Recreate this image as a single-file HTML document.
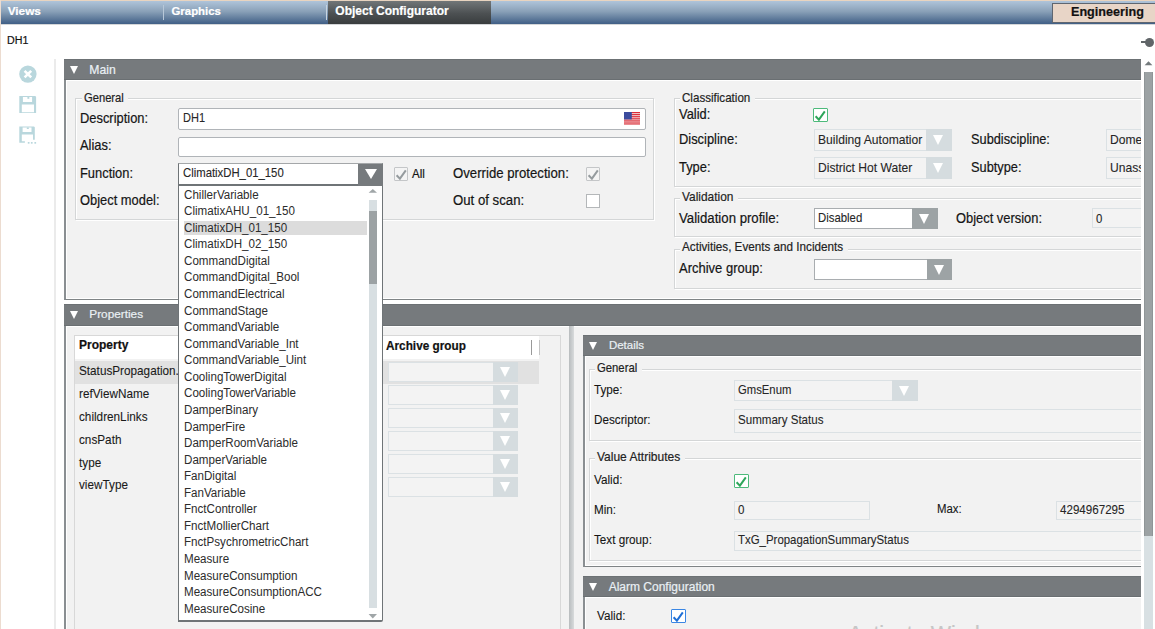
<!DOCTYPE html>
<html><head><meta charset="utf-8"><style>
*{box-sizing:border-box;margin:0;padding:0}
html,body{width:1155px;height:629px;overflow:hidden;background:#fff;font-family:"Liberation Sans",sans-serif;color:#151515}
.a{position:absolute}
.c{position:absolute;overflow:hidden}
.t{position:absolute;white-space:nowrap;line-height:1;-webkit-text-stroke:0.2px currentColor}
.n{-webkit-text-stroke:0}
.m{-webkit-text-stroke:0.1px currentColor}
.tri{position:absolute;width:0;height:0;border-left:4.9px solid transparent;border-right:4.9px solid transparent;border-top:8.5px solid #fff}
.wt{position:absolute;width:0;height:0;border-left:5.6px solid transparent;border-right:5.6px solid transparent;border-top:10px solid #fff}
</style></head><body>
<div class="a" style="left:0px;top:0px;width:1155px;height:1px;background:#e8d4c0"></div>
<div class="a" style="left:0px;top:0px;width:1px;height:629px;background:#ecdcd0"></div>
<div class="a" style="left:1px;top:1px;width:1154px;height:23px;background:linear-gradient(#afc4da,#8aa1b8 45%,#405f86)"></div>
<div class="a" style="left:1px;top:24px;width:1154px;height:1px;background:#d4d6d8"></div>
<div class="t " style="left:7.70px;top:6.11px;font-size:11.80px;font-weight:bold;color:#fff">Views</div>
<div class="a" style="left:163px;top:5px;width:1px;height:15px;background:#b8c8d8"></div>
<div class="t " style="left:171.50px;top:5.65px;font-size:11.40px;font-weight:bold;color:#fff">Graphics</div>
<div class="a" style="left:328px;top:1px;width:163px;height:23px;background:linear-gradient(#717678,#4c5052 55%,#393d3e)"></div>
<div class="a" style="left:326px;top:5px;width:1px;height:15px;background:#c8d4e0"></div>
<div class="t " style="left:335.30px;top:5.44px;font-size:12.00px;font-weight:bold;color:#fff">Object Configurator</div>
<div class="a" style="left:1052px;top:3px;width:103px;height:20px;background:#e8d5c7;border:1px solid #5f6670;border-right:none"></div>
<div class="t " style="left:1070.70px;top:5.29px;font-size:13.36px;transform:scaleX(0.9434);transform-origin:0 0;font-weight:bold;color:#111">Engineering</div>
<div class="t " style="left:6.50px;top:34.89px;font-size:11.23px;transform:scaleX(0.9524);transform-origin:0 0;color:#111">DH1</div>
<div class="a" style="left:1141px;top:41px;width:5px;height:2px;background:#606568"></div>
<div class="a" style="left:1145px;top:38px;width:9px;height:9px;background:#606568;border-radius:50%"></div>
<div class="a" style="left:54px;top:59px;width:2px;height:570px;background:#ebebeb"></div>
<svg class="a" style="left:0;top:0" width="60" height="160">
<circle cx="27.9" cy="74.1" r="8.7" fill="#b9d7dd"/>
<path d="M24.6 70.8 L31.2 77.4 M31.2 70.8 L24.6 77.4" stroke="#fff" stroke-width="2.6"/>
<path fill="#b9d7dd" fill-rule="evenodd" d="M19.3 95.9 H35.2 L36.1 96.8 V113.1 H19.3 Z M21.8 104.6 H34 V112.2 H21.8 Z M22.9 96.9 H32.1 V102.1 H22.9 Z"/>
<rect x="27.4" y="96.9" width="1.9" height="1.9" fill="#b9d7dd"/>
<path fill="#b9d7dd" fill-rule="evenodd" d="M19.3 126.5 H34 L34.8 127.3 V139.8 H33 V134.6 H21.8 V141.2 H24.9 V142.7 H19.3 Z M22.6 127.4 H31.5 V132.1 H22.6 Z"/>
<rect x="26.8" y="127.4" width="2" height="1.6" fill="#b9d7dd"/>
<rect x="27.8" y="142" width="1.7" height="1.7" fill="#b9d7dd"/>
<rect x="30.9" y="142" width="1.7" height="1.7" fill="#b9d7dd"/>
<rect x="34.4" y="142" width="1.7" height="1.7" fill="#b9d7dd"/>
</svg>
<div class="a" style="left:64px;top:59px;width:1077px;height:21px;background:#767a7d;border-top:1px solid #6c7174;border-bottom:1px solid #6a6f72"></div>
<div class="tri" style="left:70.2px;top:66px"></div>
<div class="t " style="left:89.30px;top:63.67px;font-size:12.20px;color:#eaf0f4">Main</div>
<div class="a" style="left:64px;top:80px;width:1077px;height:220px;background:#f2f2f2;border-left:2px solid #8a8f92;border-bottom:1px solid #7f8486;box-shadow:inset 1px 1px 0 #fff,inset 0 -1px 0 #fff"></div>
<div class="a" style="left:75px;top:98px;width:579px;height:122px;border:1px solid #d4d6d7;box-shadow:inset 1px 1px 0 #fff,1px 1px 0 #fff"></div>
<div class="a" style="left:81.50px;top:95px;width:46.8px;height:6px;background:#f2f2f2"></div>
<div class="t " style="left:83.50px;top:91.68px;font-size:12.54px;transform:scaleX(0.8929);transform-origin:0 0;color:#222">General</div>
<div class="t " style="left:80.00px;top:112.01px;font-size:13.93px;transform:scaleX(0.9259);transform-origin:0 0;">Description:</div>
<div class="t " style="left:80.00px;top:139.11px;font-size:13.93px;transform:scaleX(0.9259);transform-origin:0 0;">Alias:</div>
<div class="t " style="left:80.00px;top:166.81px;font-size:13.93px;transform:scaleX(0.9259);transform-origin:0 0;">Function:</div>
<div class="t " style="left:80.00px;top:193.81px;font-size:13.93px;transform:scaleX(0.9259);transform-origin:0 0;">Object model:</div>
<div class="a" style="left:178px;top:108px;width:468px;height:22px;background:#fff;border:1px solid #b0b4b8;border-radius:2px"></div>
<div class="t m" style="left:182.80px;top:112.17px;font-size:12.32px;transform:scaleX(0.8929);transform-origin:0 0;color:#262626">DH1</div>
<svg class="a" style="left:623.5px;top:112px" width="16" height="13">
<rect width="16" height="13" fill="#f4dede"/><rect y="0.00" width="16" height="1.05" fill="#dc2a36"/><rect y="1.90" width="16" height="1.05" fill="#dc2a36"/><rect y="3.80" width="16" height="1.05" fill="#dc2a36"/><rect y="5.70" width="16" height="1.05" fill="#dc2a36"/><rect y="7.60" width="16" height="1.05" fill="#dc2a36"/><rect y="9.50" width="16" height="1.05" fill="#dc2a36"/><rect y="11.40" width="16" height="1.05" fill="#dc2a36"/>
<rect width="7.8" height="7.4" fill="#3b4c9e"/>
</svg>
<div class="a" style="left:178px;top:137px;width:468px;height:20px;background:#fff;border:1px solid #b0b4b8;border-radius:2px"></div>
<div class="a" style="left:178px;top:163px;width:205px;height:23px;background:#fff;border:1px solid #6f7477;border-top-color:#a4a7a9;border-bottom-width:2px"></div>
<div class="a" style="left:358px;top:164px;width:25px;height:22px;background:#767a7d"></div>
<div class="a" style="left:364.7px;top:168.6px;width:0;height:0;border-left:6px solid transparent;border-right:6px solid transparent;border-top:10.4px solid #fff"></div>
<div class="t m" style="left:182.50px;top:167.53px;font-size:11.90px;transform:scaleX(0.9524);transform-origin:0 0;color:#262626">ClimatixDH_01_150</div>
<div class="a" style="left:393.8px;top:167px;width:14.5px;height:14px;background:#f4f4f4;border:1px solid #c4c6c8;border-radius:1px"></div>
<svg class="a" style="left:393.8px;top:167px" width="15" height="14"><path d="M2.6 8.2 L5.9 11.6 L11.8 3.4" fill="none" stroke="#959b9e" stroke-width="2.0"/></svg>
<div class="t " style="left:412.30px;top:167.78px;font-size:12.08px;transform:scaleX(0.9524);transform-origin:0 0;">All</div>
<div class="t " style="left:452.60px;top:166.13px;font-size:14.26px;transform:scaleX(0.9259);transform-origin:0 0;">Override protection:</div>
<div class="a" style="left:585.5px;top:167px;width:14.5px;height:14px;background:#f4f4f4;border:1px solid #c4c6c8;border-radius:1px"></div>
<svg class="a" style="left:585.5px;top:167px" width="15" height="14"><path d="M2.6 8.2 L5.9 11.6 L11.8 3.4" fill="none" stroke="#959b9e" stroke-width="2.0"/></svg>
<div class="t " style="left:452.60px;top:193.13px;font-size:14.26px;transform:scaleX(0.9259);transform-origin:0 0;">Out of scan:</div>
<div class="a" style="left:585.5px;top:194px;width:14px;height:14px;background:#fff;border:1px solid #b4b7b9"></div>
<div class="a" style="left:673.8px;top:98px;width:490px;height:89px;border:1px solid #d4d6d7;box-shadow:inset 1px 1px 0 #fff,1px 1px 0 #fff"></div>
<div class="a" style="left:679.90px;top:95px;width:75.3px;height:6px;background:#f2f2f2"></div>
<div class="t " style="left:681.90px;top:90.60px;font-size:12.99px;transform:scaleX(0.8929);transform-origin:0 0;color:#222">Classification</div>
<div class="t " style="left:678.70px;top:108.21px;font-size:13.93px;transform:scaleX(0.9259);transform-origin:0 0;">Valid:</div>
<div class="a" style="left:813.3px;top:108px;width:14.5px;height:14px;background:#fff;border:1.5px solid #4dba7b;border-radius:1px"></div>
<svg class="a" style="left:813.3px;top:108px" width="15" height="14"><path d="M2.6 8.2 L5.9 11.6 L11.8 3.4" fill="none" stroke="#2ea65a" stroke-width="2.0"/></svg>
<div class="t " style="left:678.70px;top:133.21px;font-size:13.93px;transform:scaleX(0.9259);transform-origin:0 0;">Discipline:</div>
<div class="t " style="left:678.70px;top:161.01px;font-size:13.93px;transform:scaleX(0.9259);transform-origin:0 0;">Type:</div>
<div class="a" style="left:814px;top:129px;width:138px;height:21.5px;background:#f3f3f3;border:1.5px solid #dbe1e4"></div>
<div class="a" style="left:926px;top:129px;width:26px;height:21.5px;background:#d5dcdf"></div>
<div class="a" style="left:933.4px;top:134.8px;width:0;height:0;border-left:5.6px solid transparent;border-right:5.6px solid transparent;border-top:10px solid #fff"></div>
<div class="c" style="left:814px;top:129px;width:112px;height:21.5px">
<div class="t m" style="left:4.30px;top:3.84px;font-size:13.19px;transform:scaleX(0.9174);transform-origin:0 0;color:#262626">Building Automatior</div>
</div>
<div class="a" style="left:814px;top:157px;width:138px;height:21.5px;background:#f3f3f3;border:1.5px solid #dbe1e4"></div>
<div class="a" style="left:926px;top:157px;width:26px;height:21.5px;background:#d5dcdf"></div>
<div class="a" style="left:933.4px;top:162.8px;width:0;height:0;border-left:5.6px solid transparent;border-right:5.6px solid transparent;border-top:10px solid #fff"></div>
<div class="c" style="left:814px;top:157px;width:112px;height:21.5px">
<div class="t m" style="left:4.30px;top:4.04px;font-size:13.19px;transform:scaleX(0.9174);transform-origin:0 0;color:#262626">District Hot Water</div>
</div>
<div class="t " style="left:971.30px;top:133.10px;font-size:13.82px;transform:scaleX(0.9259);transform-origin:0 0;">Subdiscipline:</div>
<div class="t " style="left:971.30px;top:161.10px;font-size:13.82px;transform:scaleX(0.9259);transform-origin:0 0;">Subtype:</div>
<div class="a" style="left:1106px;top:129px;width:60px;height:21.5px;background:#f3f3f3;border:1.5px solid #dbe1e4"></div>
<div class="t m" style="left:1110.00px;top:132.84px;font-size:13.19px;transform:scaleX(0.9174);transform-origin:0 0;color:#262626">Dome</div>
<div class="a" style="left:1106px;top:157px;width:60px;height:21.5px;background:#f3f3f3;border:1.5px solid #dbe1e4"></div>
<div class="t m" style="left:1110.00px;top:161.04px;font-size:13.19px;transform:scaleX(0.9174);transform-origin:0 0;color:#262626">Unass</div>
<div class="a" style="left:673.8px;top:198px;width:490px;height:39px;border:1px solid #d4d6d7;box-shadow:inset 1px 1px 0 #fff,1px 1px 0 #fff"></div>
<div class="a" style="left:679.90px;top:195px;width:58.4px;height:6px;background:#f2f2f2"></div>
<div class="t " style="left:681.90px;top:190.12px;font-size:13.33px;transform:scaleX(0.8929);transform-origin:0 0;color:#222">Validation</div>
<div class="t " style="left:678.60px;top:210.53px;font-size:14.26px;transform:scaleX(0.9259);transform-origin:0 0;">Validation profile:</div>
<div class="a" style="left:813.6px;top:207.7px;width:124.4px;height:21px;background:#fff;border:1px solid #a9adb0"></div>
<div class="a" style="left:912.0px;top:207.7px;width:26px;height:21px;background:#9da3a5"></div>
<div class="a" style="left:919.4px;top:213.8px;width:0;height:0;border-left:5.6px solid transparent;border-right:5.6px solid transparent;border-top:10px solid #fff"></div>
<div class="t m" style="left:817.90px;top:211.80px;font-size:12.52px;transform:scaleX(0.9091);transform-origin:0 0;color:#262626">Disabled</div>
<div class="t " style="left:956.30px;top:211.51px;font-size:13.93px;transform:scaleX(0.9259);transform-origin:0 0;">Object version:</div>
<div class="a" style="left:1092.4px;top:207.7px;width:60px;height:20.5px;background:#f3f3f3;border:1.5px solid #dbe1e4"></div>
<div class="t m" style="left:1096.40px;top:212.58px;font-size:12.54px;transform:scaleX(0.9091);transform-origin:0 0;color:#262626">0</div>
<div class="a" style="left:673.8px;top:249px;width:490px;height:40px;border:1px solid #d4d6d7;box-shadow:inset 1px 1px 0 #fff,1px 1px 0 #fff"></div>
<div class="a" style="left:679.90px;top:246px;width:168.3px;height:6px;background:#f2f2f2"></div>
<div class="t " style="left:681.90px;top:239.91px;font-size:13.10px;transform:scaleX(0.8929);transform-origin:0 0;color:#222">Activities, Events and Incidents</div>
<div class="t " style="left:678.60px;top:260.92px;font-size:14.04px;transform:scaleX(0.9259);transform-origin:0 0;">Archive group:</div>
<div class="a" style="left:813.6px;top:258.6px;width:138px;height:21px;background:#fff;border:1px solid #a9adb0"></div>
<div class="a" style="left:926.6px;top:258.6px;width:25px;height:21px;background:#9da3a5"></div>
<div class="a" style="left:933.5px;top:264.7px;width:0;height:0;border-left:5.6px solid transparent;border-right:5.6px solid transparent;border-top:10px solid #fff"></div>
<div class="a" style="left:1141px;top:59px;width:14px;height:570px;background:#fff"></div>
<div class="a" style="left:64px;top:304px;width:1077px;height:22px;background:#767a7d;border-top:1px solid #6c7174;border-bottom:1px solid #6a6f72"></div>
<div class="tri" style="left:70.2px;top:311px"></div>
<div class="t " style="left:89.30px;top:309.21px;font-size:11.80px;color:#eaf0f4">Properties</div>
<div class="a" style="left:64px;top:326px;width:1077px;height:303px;background:#f2f2f2;border-left:2px solid #8a8f92;box-shadow:inset 1px 1px 0 #fff"></div>
<div class="a" style="left:74px;top:335px;width:487px;height:294px;border:1px solid #d8d8d8;border-bottom:none;background:#f2f2f2"></div>
<div class="a" style="left:75px;top:336px;width:464px;height:23px;background:#fff"></div>
<div class="t " style="left:78.80px;top:339.14px;font-size:12.36px;transform:scaleX(0.9709);transform-origin:0 0;font-weight:bold;color:#111">Property</div>
<div class="t " style="left:385.90px;top:339.71px;font-size:12.15px;transform:scaleX(0.9709);transform-origin:0 0;font-weight:bold;color:#111">Archive group</div>
<div class="a" style="left:531px;top:340px;width:1px;height:15px;background:#999"></div>
<div class="a" style="left:539px;top:340px;width:1px;height:15px;background:#c4c4c4"></div>
<div class="a" style="left:75px;top:361px;width:464px;height:23px;background:#e1e1e1"></div>
<div class="t m" style="left:78.50px;top:364.36px;font-size:13.28px;transform:scaleX(0.8850);transform-origin:0 0;color:#1a1a1a">StatusPropagation.</div>
<div class="t m" style="left:78.50px;top:387.18px;font-size:13.28px;transform:scaleX(0.8850);transform-origin:0 0;color:#1a1a1a">refViewName</div>
<div class="t m" style="left:78.50px;top:410.00px;font-size:13.28px;transform:scaleX(0.8850);transform-origin:0 0;color:#1a1a1a">childrenLinks</div>
<div class="t m" style="left:78.50px;top:432.82px;font-size:13.28px;transform:scaleX(0.8850);transform-origin:0 0;color:#1a1a1a">cnsPath</div>
<div class="t m" style="left:78.50px;top:455.64px;font-size:13.28px;transform:scaleX(0.8850);transform-origin:0 0;color:#1a1a1a">type</div>
<div class="t m" style="left:78.50px;top:478.46px;font-size:13.28px;transform:scaleX(0.8850);transform-origin:0 0;color:#1a1a1a">viewType</div>
<div class="a" style="left:387.7px;top:362.3px;width:130.5px;height:20px;background:#f3f3f3;border:1.5px solid #dbe1e4"></div>
<div class="a" style="left:492.5px;top:362.3px;width:25.7px;height:20px;background:#d5dcdf"></div>
<div class="a" style="left:499.8px;top:367.3px;width:0;height:0;border-left:5.6px solid transparent;border-right:5.6px solid transparent;border-top:10px solid #fff"></div>
<div class="a" style="left:387.7px;top:385.2px;width:130.5px;height:20px;background:#f3f3f3;border:1.5px solid #dbe1e4"></div>
<div class="a" style="left:492.5px;top:385.2px;width:25.7px;height:20px;background:#d5dcdf"></div>
<div class="a" style="left:499.8px;top:390.2px;width:0;height:0;border-left:5.6px solid transparent;border-right:5.6px solid transparent;border-top:10px solid #fff"></div>
<div class="a" style="left:387.7px;top:408px;width:130.5px;height:20px;background:#f3f3f3;border:1.5px solid #dbe1e4"></div>
<div class="a" style="left:492.5px;top:408px;width:25.7px;height:20px;background:#d5dcdf"></div>
<div class="a" style="left:499.8px;top:413.0px;width:0;height:0;border-left:5.6px solid transparent;border-right:5.6px solid transparent;border-top:10px solid #fff"></div>
<div class="a" style="left:387.7px;top:431px;width:130.5px;height:20px;background:#f3f3f3;border:1.5px solid #dbe1e4"></div>
<div class="a" style="left:492.5px;top:431px;width:25.7px;height:20px;background:#d5dcdf"></div>
<div class="a" style="left:499.8px;top:436.0px;width:0;height:0;border-left:5.6px solid transparent;border-right:5.6px solid transparent;border-top:10px solid #fff"></div>
<div class="a" style="left:387.7px;top:454px;width:130.5px;height:20px;background:#f3f3f3;border:1.5px solid #dbe1e4"></div>
<div class="a" style="left:492.5px;top:454px;width:25.7px;height:20px;background:#d5dcdf"></div>
<div class="a" style="left:499.8px;top:459.0px;width:0;height:0;border-left:5.6px solid transparent;border-right:5.6px solid transparent;border-top:10px solid #fff"></div>
<div class="a" style="left:387.7px;top:477px;width:130.5px;height:20px;background:#f3f3f3;border:1.5px solid #dbe1e4"></div>
<div class="a" style="left:492.5px;top:477px;width:25.7px;height:20px;background:#d5dcdf"></div>
<div class="a" style="left:499.8px;top:482.0px;width:0;height:0;border-left:5.6px solid transparent;border-right:5.6px solid transparent;border-top:10px solid #fff"></div>
<div class="a" style="left:569px;top:326px;width:5px;height:303px;background:linear-gradient(90deg,#b8bcbe,#d8dbdc)"></div>
<div class="a" style="left:583px;top:335px;width:558px;height:21px;background:#767a7d;border-top:1px solid #6c7174;border-bottom:1px solid #6a6f72"></div>
<div class="tri" style="left:589.2px;top:341.5px"></div>
<div class="t " style="left:608.90px;top:340.27px;font-size:11.50px;color:#eaf0f4">Details</div>
<div class="a" style="left:583px;top:356px;width:558px;height:211px;background:#f2f2f2;border-left:2px solid #8a8f92;border-bottom:1px solid #7f8486;box-shadow:inset 1px 1px 0 #fff,inset 0 -1px 0 #fff"></div>
<div class="a" style="left:589px;top:369px;width:580px;height:72px;border:1px solid #d4d6d7;box-shadow:inset 1px 1px 0 #fff,1px 1px 0 #fff"></div>
<div class="a" style="left:594.90px;top:366px;width:47.2px;height:6px;background:#f2f2f2"></div>
<div class="t " style="left:596.90px;top:361.68px;font-size:12.43px;transform:scaleX(0.9091);transform-origin:0 0;color:#222">General</div>
<div class="t m" style="left:594.30px;top:382.81px;font-size:13.22px;transform:scaleX(0.8850);transform-origin:0 0;">Type:</div>
<div class="a" style="left:734px;top:380px;width:184px;height:21px;background:#f3f3f3;border:1.5px solid #dbe1e4"></div>
<div class="a" style="left:892px;top:380px;width:26px;height:21px;background:#d5dcdf"></div>
<div class="a" style="left:899.4px;top:385.5px;width:0;height:0;border-left:5.6px solid transparent;border-right:5.6px solid transparent;border-top:10px solid #fff"></div>
<div class="c" style="left:734px;top:380px;width:158px;height:21px">
<div class="t m" style="left:4.30px;top:3.50px;font-size:12.88px;transform:scaleX(0.8772);transform-origin:0 0;color:#262626">GmsEnum</div>
</div>
<div class="t m" style="left:594.30px;top:413.21px;font-size:13.22px;transform:scaleX(0.8850);transform-origin:0 0;">Descriptor:</div>
<div class="a" style="left:734px;top:409px;width:420px;height:23.5px;background:#f3f3f3;border:1.5px solid #dbe1e4"></div>
<div class="t m" style="left:738.00px;top:412.53px;font-size:13.07px;transform:scaleX(0.8850);transform-origin:0 0;color:#262626">Summary Status</div>
<div class="a" style="left:589px;top:458px;width:580px;height:103px;border:1px solid #d4d6d7;box-shadow:inset 1px 1px 0 #fff,1px 1px 0 #fff"></div>
<div class="a" style="left:594.70px;top:455px;width:90.8px;height:6px;background:#f2f2f2"></div>
<div class="t " style="left:596.70px;top:450.22px;font-size:13.44px;transform:scaleX(0.8929);transform-origin:0 0;color:#222">Value Attributes</div>
<div class="t m" style="left:594.10px;top:472.81px;font-size:13.22px;transform:scaleX(0.8850);transform-origin:0 0;">Valid:</div>
<div class="a" style="left:734px;top:473.6px;width:14.5px;height:14px;background:#fff;border:1.5px solid #4dba7b;border-radius:1px"></div>
<svg class="a" style="left:734px;top:473.6px" width="15" height="14"><path d="M2.6 8.2 L5.9 11.6 L11.8 3.4" fill="none" stroke="#2ea65a" stroke-width="2.0"/></svg>
<div class="t m" style="left:594.10px;top:502.81px;font-size:13.22px;transform:scaleX(0.8850);transform-origin:0 0;">Min:</div>
<div class="a" style="left:734px;top:501px;width:135.5px;height:19px;background:#f3f3f3;border:1.5px solid #dbe1e4"></div>
<div class="t m" style="left:738.00px;top:502.81px;font-size:13.22px;transform:scaleX(0.8772);transform-origin:0 0;color:#262626">0</div>
<div class="t m" style="left:937.00px;top:502.70px;font-size:12.88px;transform:scaleX(0.8850);transform-origin:0 0;">Max:</div>
<div class="a" style="left:1056px;top:501px;width:100px;height:19px;background:#f3f3f3;border:1.5px solid #dbe1e4"></div>
<div class="t m" style="left:1060.00px;top:502.70px;font-size:13.11px;transform:scaleX(0.8850);transform-origin:0 0;color:#262626">4294967295</div>
<div class="t m" style="left:594.10px;top:532.81px;font-size:13.22px;transform:scaleX(0.8850);transform-origin:0 0;">Text group:</div>
<div class="a" style="left:734px;top:531px;width:420px;height:20px;background:#f3f3f3;border:1.5px solid #dbe1e4"></div>
<div class="t m" style="left:738.00px;top:533.36px;font-size:13.04px;transform:scaleX(0.8772);transform-origin:0 0;color:#262626">TxG_PropagationSummaryStatus</div>
<div class="a" style="left:583px;top:576px;width:558px;height:21px;background:#767a7d;border-top:1px solid #6c7174;border-bottom:1px solid #6a6f72"></div>
<div class="tri" style="left:589.2px;top:583px"></div>
<div class="t " style="left:608.70px;top:580.84px;font-size:12.00px;color:#eaf0f4">Alarm Configuration</div>
<div class="a" style="left:583px;top:597px;width:558px;height:40px;background:#f2f2f2;border-left:2px solid #8a8f92;box-shadow:inset 1px 1px 0 #fff"></div>
<div class="t m" style="left:596.70px;top:608.81px;font-size:13.22px;transform:scaleX(0.8850);transform-origin:0 0;">Valid:</div>
<div class="a" style="left:671.4px;top:608.6px;width:14.5px;height:14px;background:#fff;border:1.5px solid #3a86e4;border-radius:1px"></div>
<svg class="a" style="left:671.4px;top:608.6px" width="15" height="14"><path d="M2.6 8.2 L5.9 11.6 L11.8 3.4" fill="none" stroke="#1f6fd6" stroke-width="2.0"/></svg>
<div class="t " style="left:848.30px;top:624.10px;font-size:21.50px;color:#c6c6c6">Activate Windows</div>
<div class="a" style="left:1141px;top:59px;width:14px;height:570px;background:#fff"></div>
<svg class="a" style="left:1144px;top:60px" width="9" height="6"><path d="M0.6 5.3 L4.5 1.3 L8.4 5.3 Z" fill="#737a7d"/></svg>
<div class="a" style="left:1144px;top:72px;width:9px;height:464.4px;background:#9ca2a4;border-left:1px solid #8f9597;border-right:1px solid #8f9597"></div>
<div class="a" style="left:1144px;top:536.4px;width:9px;height:93px;background:#d8e0e3"></div>
<div class="a" style="left:178px;top:186px;width:205px;height:436px;background:#fff;border:1px solid #6f7477;border-top:none;border-bottom-width:2px;border-bottom-right-radius:2px"></div>
<div class="a" style="left:183.8px;top:220.5px;width:183.2px;height:14.7px;background:#dcdcdc"></div>
<div class="t n" style="left:183.80px;top:188.69px;font-size:12.30px;transform:scaleX(0.9434);transform-origin:0 0;color:#2c2c2c">ChillerVariable</div>
<div class="t n" style="left:183.80px;top:205.25px;font-size:12.30px;transform:scaleX(0.9434);transform-origin:0 0;color:#2c2c2c">ClimatixAHU_01_150</div>
<div class="t n" style="left:183.80px;top:221.81px;font-size:12.30px;transform:scaleX(0.9434);transform-origin:0 0;color:#2c2c2c">ClimatixDH_01_150</div>
<div class="t n" style="left:183.80px;top:238.37px;font-size:12.30px;transform:scaleX(0.9434);transform-origin:0 0;color:#2c2c2c">ClimatixDH_02_150</div>
<div class="t n" style="left:183.80px;top:254.93px;font-size:12.30px;transform:scaleX(0.9434);transform-origin:0 0;color:#2c2c2c">CommandDigital</div>
<div class="t n" style="left:183.80px;top:271.49px;font-size:12.30px;transform:scaleX(0.9434);transform-origin:0 0;color:#2c2c2c">CommandDigital_Bool</div>
<div class="t n" style="left:183.80px;top:288.05px;font-size:12.30px;transform:scaleX(0.9434);transform-origin:0 0;color:#2c2c2c">CommandElectrical</div>
<div class="t n" style="left:183.80px;top:304.61px;font-size:12.30px;transform:scaleX(0.9434);transform-origin:0 0;color:#2c2c2c">CommandStage</div>
<div class="t n" style="left:183.80px;top:321.17px;font-size:12.30px;transform:scaleX(0.9434);transform-origin:0 0;color:#2c2c2c">CommandVariable</div>
<div class="t n" style="left:183.80px;top:337.73px;font-size:12.30px;transform:scaleX(0.9434);transform-origin:0 0;color:#2c2c2c">CommandVariable_Int</div>
<div class="t n" style="left:183.80px;top:354.29px;font-size:12.30px;transform:scaleX(0.9434);transform-origin:0 0;color:#2c2c2c">CommandVariable_Uint</div>
<div class="t n" style="left:183.80px;top:370.85px;font-size:12.30px;transform:scaleX(0.9434);transform-origin:0 0;color:#2c2c2c">CoolingTowerDigital</div>
<div class="t n" style="left:183.80px;top:387.41px;font-size:12.30px;transform:scaleX(0.9434);transform-origin:0 0;color:#2c2c2c">CoolingTowerVariable</div>
<div class="t n" style="left:183.80px;top:403.97px;font-size:12.30px;transform:scaleX(0.9434);transform-origin:0 0;color:#2c2c2c">DamperBinary</div>
<div class="t n" style="left:183.80px;top:420.53px;font-size:12.30px;transform:scaleX(0.9434);transform-origin:0 0;color:#2c2c2c">DamperFire</div>
<div class="t n" style="left:183.80px;top:437.09px;font-size:12.30px;transform:scaleX(0.9434);transform-origin:0 0;color:#2c2c2c">DamperRoomVariable</div>
<div class="t n" style="left:183.80px;top:453.65px;font-size:12.30px;transform:scaleX(0.9434);transform-origin:0 0;color:#2c2c2c">DamperVariable</div>
<div class="t n" style="left:183.80px;top:470.21px;font-size:12.30px;transform:scaleX(0.9434);transform-origin:0 0;color:#2c2c2c">FanDigital</div>
<div class="t n" style="left:183.80px;top:486.77px;font-size:12.30px;transform:scaleX(0.9434);transform-origin:0 0;color:#2c2c2c">FanVariable</div>
<div class="t n" style="left:183.80px;top:503.33px;font-size:12.30px;transform:scaleX(0.9434);transform-origin:0 0;color:#2c2c2c">FnctController</div>
<div class="t n" style="left:183.80px;top:519.89px;font-size:12.30px;transform:scaleX(0.9434);transform-origin:0 0;color:#2c2c2c">FnctMollierChart</div>
<div class="t n" style="left:183.80px;top:536.45px;font-size:12.30px;transform:scaleX(0.9434);transform-origin:0 0;color:#2c2c2c">FnctPsychrometricChart</div>
<div class="t n" style="left:183.80px;top:553.01px;font-size:12.30px;transform:scaleX(0.9434);transform-origin:0 0;color:#2c2c2c">Measure</div>
<div class="t n" style="left:183.80px;top:569.57px;font-size:12.30px;transform:scaleX(0.9434);transform-origin:0 0;color:#2c2c2c">MeasureConsumption</div>
<div class="t n" style="left:183.80px;top:586.13px;font-size:12.30px;transform:scaleX(0.9434);transform-origin:0 0;color:#2c2c2c">MeasureConsumptionACC</div>
<div class="t n" style="left:183.80px;top:602.69px;font-size:12.30px;transform:scaleX(0.9434);transform-origin:0 0;color:#2c2c2c">MeasureCosine</div>
<svg class="a" style="left:368px;top:188px" width="10" height="6"><path d="M0.6 4.8 L4.8 0.9 L9 4.8 Z" fill="#a0a6a8"/></svg>
<div class="a" style="left:369.3px;top:200px;width:7.8px;height:408.3px;background:#d8dfe2"></div>
<div class="a" style="left:369.3px;top:210.7px;width:7.8px;height:72.9px;background:#9ca2a4"></div>
<svg class="a" style="left:368px;top:613px" width="10" height="7"><path d="M0.6 0.9 L4.8 5.5 L9 0.9 Z" fill="#a0a6a8"/></svg>
</body></html>
